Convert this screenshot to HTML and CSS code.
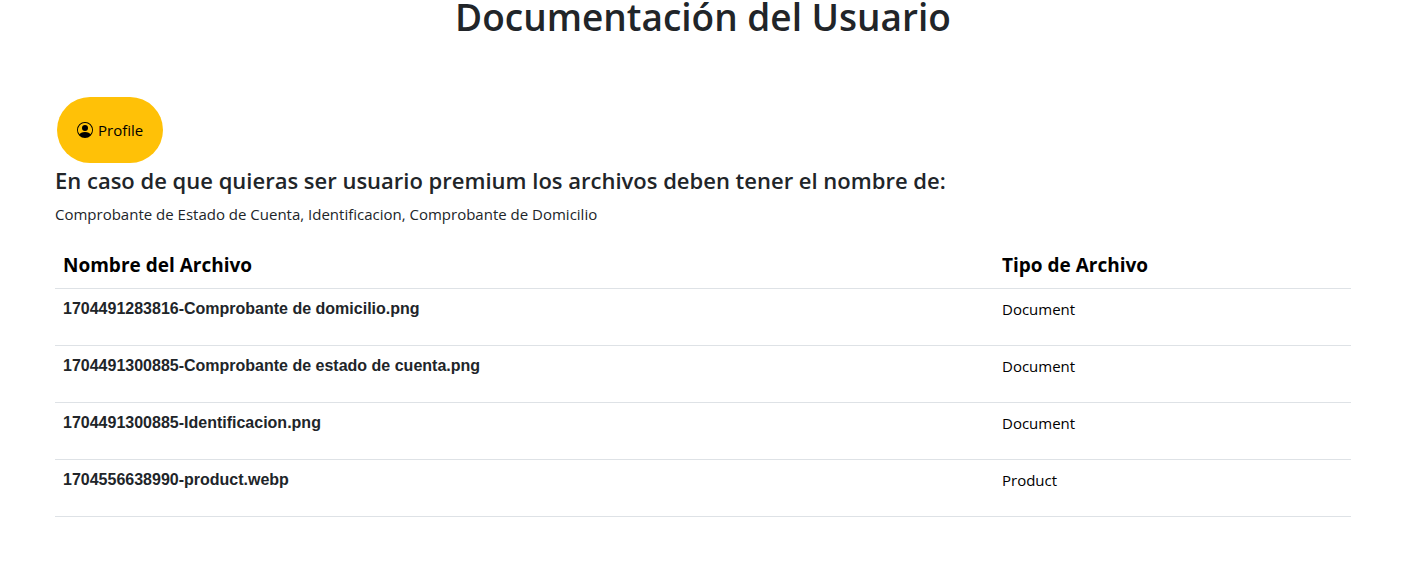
FILE: index.html
```html
<!DOCTYPE html>
<html lang="es">
<head>
<meta charset="utf-8">
<title>Documentación del Usuario</title>
<link rel="stylesheet" href="styles.css">
</head>
<body>
<main class="page">
  <h1 class="title">Documentación del Usuario</h1>
  <a class="profile" href="#profile">
    <svg class="icon" viewBox="0 0 16 16" fill="currentColor" aria-hidden="true"><path d="M11 6a3 3 0 1 1-6 0 3 3 0 0 1 6 0"/><path fill-rule="evenodd" d="M0 8a8 8 0 1 1 16 0A8 8 0 0 1 0 8m8-7a7 7 0 0 0-5.468 11.37C3.242 11.226 4.805 10 8 10s4.757 1.225 5.468 2.37A7 7 0 0 0 8 1"/></svg>
    <span>Profile</span>
  </a>
  <h2 class="subtitle">En caso de que quieras ser usuario premium los archivos deben tener el nombre de:</h2>
  <p class="names">Comprobante de Estado de Cuenta, Identificacion, Comprobante de Domicilio</p>
  <table class="files">
    <thead>
      <tr><th class="name" scope="col">Nombre del Archivo</th><th scope="col">Tipo de Archivo</th></tr>
    </thead>
    <tbody>
      <tr><th scope="row">1704491283816-Comprobante de domicilio.png</th><td>Document</td></tr>
      <tr><th scope="row">1704491300885-Comprobante de estado de cuenta.png</th><td>Document</td></tr>
      <tr><th scope="row">1704491300885-Identificacion.png</th><td>Document</td></tr>
      <tr><th scope="row">1704556638990-product.webp</th><td>Product</td></tr>
    </tbody>
  </table>
</main>
</body>
</html>
```
FILE: styles.css
```css
* { box-sizing: border-box; }
body {
  margin: 0;
  background: #fff;
  color: #212529;
  font: 15px/24px "Segoe UI", "Open Sans", "Noto Sans", sans-serif;
}
.page { padding: 0 61px 50px 55px; }
.title {
  margin: 0 0 63px;
  font-size: 37px;
  font-weight: 600;
  line-height: 34px;
  text-align: center;
}
.profile {
  display: flex;
  align-items: center;
  gap: 5px;
  width: fit-content;
  height: 66px;
  margin-left: 2px;
  padding: 0 20px;
  border-radius: 33px;
  background: #ffc107;
  color: #000;
  text-decoration: none;
}
.icon { width: 16px; height: 16px; }
.subtitle {
  margin: 3px 0 7px;
  font-size: 22px;
  font-weight: 600;
  line-height: 29px;
}
.names { margin: 0 0 16px; }
.files { width: 100%; border-collapse: collapse; }
.files th, .files td {
  padding: 8px;
  border-bottom: 1px solid #dee2e6;
  text-align: left;
  vertical-align: top;
}
.files thead th { color: #000; font-size: 19px; font-weight: 700; line-height: 30px; }
.files .name { width: 939px; }
.files tbody tr { height: 57px; }
.files tbody th { font: bold 16px/24px "Liberation Sans", Arial, sans-serif; }
.files td { color: #000; }
```
